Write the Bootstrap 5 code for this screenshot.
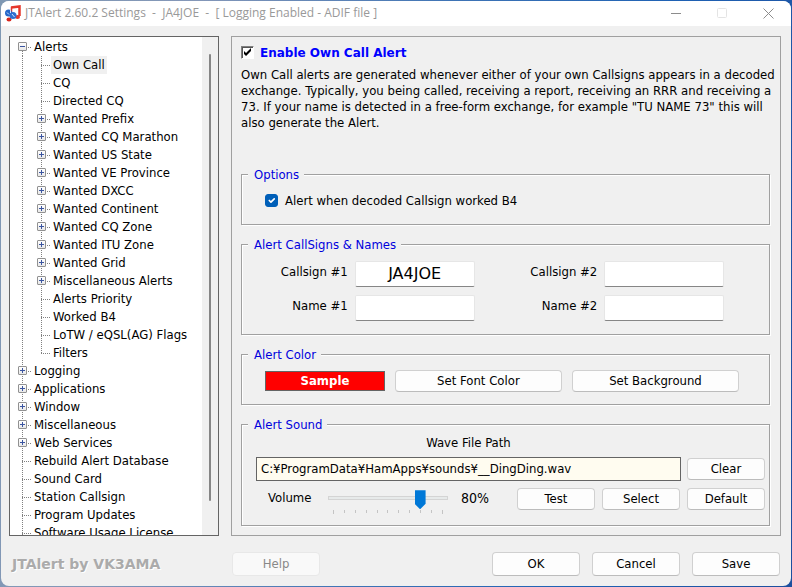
<!DOCTYPE html>
<html lang="en">
<head>
<meta charset="utf-8">
<meta name="viewport" content="width=device-width, initial-scale=1">
<title>JTAlert 2.60.2 Settings</title>
<link href="https://cdn.jsdelivr.net/npm/bootstrap@5.3.0/dist/css/bootstrap.min.css" rel="stylesheet">
<style>
:root { --face: #f0f0f0; --edge: #a0a0a0; --dark: #646464; --dot: #808080; }
body {
  padding: 1px;
  font: 13px/18px "DejaVu Sans Condensed", "DejaVu Sans", sans-serif;
  color: #000;
  background: linear-gradient(100deg, #7f98b3 0%, #8497b8 22%, #3f74b5 50%, #1f62b4 75%, #1d4f9e 100%);
}
.app-window { background: var(--face); border-radius: 8px; overflow: hidden; }
.title-bar { height: 25px; background: #fff; color: #999; font: 12px/24px "Open Sans", "Noto Sans", sans-serif; }
.title-icon { margin: 1px 4px 0 4px; }
.caption-btn { width: 46px; border: 0; background: none; color: #8c8c8c; padding: 0; display: grid; place-items: center; }
.caption-btn:disabled { color: #e4e4e4; }
.main-area { min-height: 0; padding: 10px 10px 0 8px; gap: 12px; }

/* tree */
.tree-pane { flex: none; width: 210px; background: #fff; border: 1px solid var(--dark); }
.tree { padding: 1px 0 0 3px; overflow: hidden; }
.tree ul { list-style: none; margin: 0; padding: 0; }
.tree a { color: #000; text-decoration: none; padding: 0 2px; white-space: nowrap; }
.tree a.selected { background: var(--face); }
.tree-row { display: flex; height: 18px; }
.twig {
  width: 19px; flex: none; display: grid; place-items: center;
  background:
    repeating-linear-gradient(to bottom, var(--dot) 0 1px, transparent 1px 2px) 9px 0 / 1px 100% no-repeat,
    repeating-linear-gradient(to right, var(--dot) 0 1px, transparent 1px 2px) 9px 9px / 9px 1px no-repeat;
}
.tree > ul > li:first-child > .tree-row > .twig {
  background-size: 1px 9px, 9px 1px; background-position: 9px 9px, 9px 9px;
}
.tree ul ul > li:last-child .twig { background-size: 1px 9px, 9px 1px; }
.tree ul ul {
  padding-left: 19px;
  background: repeating-linear-gradient(to bottom, var(--dot) 0 1px, transparent 1px 2px) 9px 0 / 1px 100% no-repeat;
}
.toggle {
  width: 9px; height: 9px; padding: 0; border: 1px solid #919191; border-radius: 1px;
  background:
    linear-gradient(#3b55a0, #3b55a0) center / 5px 1px no-repeat,
    linear-gradient(#3b55a0, #3b55a0) center / 1px 5px no-repeat,
    linear-gradient(#fff, #e8e8e8);
}
.toggle.open { background: linear-gradient(#3b55a0, #3b55a0) center / 5px 1px no-repeat, linear-gradient(#fff, #e8e8e8); }
.scroll-lane { width: 16px; background: var(--face); padding-top: 17px; }
.scroll-thumb { width: 2px; height: 93%; background: #868686; border-radius: 1px; }

/* page */
.page-pane { min-width: 0; border: 1px solid var(--edge); padding: 7px 10px 10px 9px; }
.page-head { font: bold 12px/18px "DejaVu Sans", sans-serif; color: #00f; gap: 6px; }
.classic-check {
  appearance: none; width: 13px; height: 13px; margin: 0;
  border: 1px solid; border-color: #808080 #fff #fff #808080;
  box-shadow: inset 1px 1px 0 #555;
  background: #fff url("data:image/svg+xml,%3Csvg xmlns='http://www.w3.org/2000/svg' viewBox='0 0 11 11'%3E%3Cpath d='M2 4v3l2 2 5-5V1L4 6z'/%3E%3C/svg%3E") center / 11px 11px no-repeat;
}
.about { margin: 5px 0 35px; line-height: 16px; white-space: nowrap; }
.group { border: 1px solid var(--edge); padding: 0 4px 0 6px; box-shadow: 1px 1px 0 #fff, inset 1px 1px 0 #fff; }
.group + .group { margin-top: 11px; }
.group > legend { float: none; width: auto; margin: 0; padding: 0 5px 0 6px; font-size: 13px; line-height: 18px; color: #00d; background: var(--face); }
.options-body { padding: 8px 0 14px 17px; gap: 7px; }
.options-body .form-check-input { width: 13px; height: 13px; margin: 0; border-color: #005fb8; background-color: #005fb8; border-radius: 3px; background-size: 11px; box-shadow: none; }
.names-body { display: grid; grid-template-columns: 100fr 120fr 116fr 120fr 34fr; gap: 8px 7px; padding: 7px 0 13px; }
.names-body label { text-align: right; line-height: 22px; }
.names-body .row-start { grid-column: 1; }
.field { height: 26px; min-width: 0; padding: 0; border: 1px solid #e6e6e6; border-bottom-color: #868686; border-radius: 2px; background: #fff; text-align: center; font: 16px/24px "DejaVu Sans", sans-serif; }
.push {
  height: 22px; padding: 0; border: 1px solid #d0d0d0; border-bottom-color: #bcbcbc; border-radius: 4px;
  background: #fdfdfd; color: #000; font-size: 13px; line-height: 20px;
}
.push:disabled { background: #f9f9f9; border-color: #e8e8e8; color: #888; opacity: 1; }
.color-body { padding: 6px 26px 12px 17px; gap: 10px; }
.sample { flex: 120 1 0; height: 20px; line-height: 18px; border: 1px solid var(--dark); background: #f00; color: #fff; }
.color-body .push { flex: 168 1 0; }
.sound-body { padding: 0 0 11px 8px; }
.path-label { margin-right: 84px; line-height: 17px; }
.path-row { margin-top: 6px; gap: 6px; }
.path-field { height: 24px; min-width: 0; border: 1px solid var(--dark); background: #fffcf0; padding: 0 4px; font-size: 13px; }
.sound-body .push { width: 78px; flex: none; }
.volume-row { margin-top: 7px; }
.volume-label { width: 72px; padding-left: 12px; line-height: 20px; }
.volume-box { flex: 0 1 120px; }
.volume { appearance: none; display: block; width: 100%; height: 19px; margin: 1px 0 2px; background: none; }
.volume::-webkit-slider-runnable-track { height: 4px; background: #e7eaea; border: 1px solid #d4d4d4; }
.volume::-webkit-slider-thumb { appearance: none; width: 11px; height: 19px; margin-top: -7px; background: #0078d7; clip-path: polygon(0 0, 100% 0, 100% 72%, 50% 100%, 0 72%); }
.ticks { padding: 0 5px; }
.ticks span { width: 1px; height: 3px; background: #c4c4c4; }
.ticks span:first-child, .ticks span:last-child { height: 4px; }
.volume-value { margin-left: 13px; font-size: 14px; line-height: 20px; }
.button-trio { gap: 7px; }

.foot { padding: 16px 11px 10px 11px; gap: 12px; }
.foot .push { width: 88px; height: 24px; line-height: 22px; }
.brand { width: 208px; font: bold 14px/24px "DejaVu Sans", sans-serif; color: #ababab; text-shadow: 1px 1px 0 #fff; }
</style>
</head>
<body class="vh-100">
<div class="app-window h-100 d-flex flex-column">
  <header class="title-bar d-flex">
    <svg class="title-icon" width="16" height="22" viewBox="0 0 16 22" aria-hidden="true">
      <path d="M6 5.500 14.500 4.500V14" fill="none" stroke="#e5372b" stroke-width="2.500"/>
      <path d="M6.500 5v11" stroke="#e5372b" stroke-width="1.500"/>
      <ellipse cx="12.500" cy="15" rx="2.500" ry="2" fill="#e5372b"/>
      <ellipse cx="4" cy="17.500" rx="2.500" ry="2" fill="#d9261c"/>
      <circle cx="3.500" cy="11" r="3.500" fill="#2467c9"/>
      <circle cx="8" cy="13.500" r="3.500" fill="#2f6fd0"/>
      <path d="M2 10.500l2 2M7 12l2.500 3M5.500 8v3" stroke="#cfe2ff" stroke-width="1"/>
    </svg>
    <span class="flex-grow-1 text-nowrap">JTAlert 2.60.2 Settings&nbsp; -&nbsp; JA4JOE&nbsp; -&nbsp; [ Logging Enabled - ADIF file ]</span>
    <button class="caption-btn" type="button" aria-label="Minimize"><svg width="11" height="11"><path d="M0 5.500h10" stroke="currentColor"/></svg></button>
    <button class="caption-btn" type="button" aria-label="Maximize" disabled><svg width="11" height="11"><rect x=".5" y=".5" width="9" height="9" rx="1" fill="none" stroke="currentColor"/></svg></button>
    <button class="caption-btn" type="button" aria-label="Close"><svg width="11" height="11"><path d="M.5.5l10 10m0-10l-10 10" stroke="currentColor"/></svg></button>
  </header>

  <main class="main-area d-flex flex-grow-1">
    <nav class="tree-pane d-flex" aria-label="Settings sections">
      <div class="tree flex-grow-1">
        <ul>
          <li>
            <div class="tree-row"><span class="twig"><button class="toggle open" type="button" aria-label="Collapse Alerts"></button></span><a href="#">Alerts</a></div>
            <ul>
              <li class="tree-row"><span class="twig"></span><a class="selected" href="#">Own Call</a></li>
              <li class="tree-row"><span class="twig"></span><a href="#">CQ</a></li>
              <li class="tree-row"><span class="twig"></span><a href="#">Directed CQ</a></li>
              <li class="tree-row"><span class="twig"><button class="toggle" type="button" aria-label="Expand"></button></span><a href="#">Wanted Prefix</a></li>
              <li class="tree-row"><span class="twig"><button class="toggle" type="button" aria-label="Expand"></button></span><a href="#">Wanted CQ Marathon</a></li>
              <li class="tree-row"><span class="twig"><button class="toggle" type="button" aria-label="Expand"></button></span><a href="#">Wanted US State</a></li>
              <li class="tree-row"><span class="twig"><button class="toggle" type="button" aria-label="Expand"></button></span><a href="#">Wanted VE Province</a></li>
              <li class="tree-row"><span class="twig"><button class="toggle" type="button" aria-label="Expand"></button></span><a href="#">Wanted DXCC</a></li>
              <li class="tree-row"><span class="twig"><button class="toggle" type="button" aria-label="Expand"></button></span><a href="#">Wanted Continent</a></li>
              <li class="tree-row"><span class="twig"><button class="toggle" type="button" aria-label="Expand"></button></span><a href="#">Wanted CQ Zone</a></li>
              <li class="tree-row"><span class="twig"><button class="toggle" type="button" aria-label="Expand"></button></span><a href="#">Wanted ITU Zone</a></li>
              <li class="tree-row"><span class="twig"><button class="toggle" type="button" aria-label="Expand"></button></span><a href="#">Wanted Grid</a></li>
              <li class="tree-row"><span class="twig"><button class="toggle" type="button" aria-label="Expand"></button></span><a href="#">Miscellaneous Alerts</a></li>
              <li class="tree-row"><span class="twig"></span><a href="#">Alerts Priority</a></li>
              <li class="tree-row"><span class="twig"></span><a href="#">Worked B4</a></li>
              <li class="tree-row"><span class="twig"></span><a href="#">LoTW / eQSL(AG) Flags</a></li>
              <li class="tree-row"><span class="twig"></span><a href="#">Filters</a></li>
            </ul>
          </li>
          <li class="tree-row"><span class="twig"><button class="toggle" type="button" aria-label="Expand"></button></span><a href="#">Logging</a></li>
          <li class="tree-row"><span class="twig"><button class="toggle" type="button" aria-label="Expand"></button></span><a href="#">Applications</a></li>
          <li class="tree-row"><span class="twig"><button class="toggle" type="button" aria-label="Expand"></button></span><a href="#">Window</a></li>
          <li class="tree-row"><span class="twig"><button class="toggle" type="button" aria-label="Expand"></button></span><a href="#">Miscellaneous</a></li>
          <li class="tree-row"><span class="twig"><button class="toggle" type="button" aria-label="Expand"></button></span><a href="#">Web Services</a></li>
          <li class="tree-row"><span class="twig"></span><a href="#">Rebuild Alert Database</a></li>
          <li class="tree-row"><span class="twig"></span><a href="#">Sound Card</a></li>
          <li class="tree-row"><span class="twig"></span><a href="#">Station Callsign</a></li>
          <li class="tree-row"><span class="twig"></span><a href="#">Program Updates</a></li>
          <li class="tree-row"><span class="twig"></span><a href="#">Software Usage License</a></li>
        </ul>
      </div>
      <div class="scroll-lane d-flex justify-content-center"><div class="scroll-thumb"></div></div>
    </nav>

    <section class="page-pane flex-grow-1">
      <div class="page-head d-flex align-items-center">
        <input class="classic-check" type="checkbox" id="enable" checked>
        <label for="enable">Enable Own Call Alert</label>
      </div>
      <p class="about">Own Call alerts are generated whenever either of your own Callsigns appears in a decoded<br>exchange. Typically, you being called, receiving a report, receiving an RRR and receiving a<br>73. If your name is detected in a free-form exchange, for example "TU NAME 73" this will<br>also generate the Alert.</p>

      <fieldset class="group">
        <legend>Options</legend>
        <div class="options-body d-flex align-items-center">
          <input class="form-check-input" type="checkbox" id="worked" checked>
          <label for="worked">Alert when decoded Callsign worked B4</label>
        </div>
      </fieldset>

      <fieldset class="group">
        <legend>Alert CallSigns &amp; Names</legend>
        <div class="names-body">
          <label for="call1">Callsign #1</label><input class="field" id="call1" type="text" value="JA4JOE">
          <label for="call2">Callsign #2</label><input class="field" id="call2" type="text">
          <label class="row-start" for="name1">Name #1</label><input class="field" id="name1" type="text">
          <label for="name2">Name #2</label><input class="field" id="name2" type="text">
        </div>
      </fieldset>

      <fieldset class="group">
        <legend>Alert Color</legend>
        <div class="color-body d-flex align-items-center">
          <div class="sample text-center fw-bold">Sample</div>
          <button class="btn push" type="button">Set Font Color</button>
          <button class="btn push" type="button">Set Background</button>
        </div>
      </fieldset>

      <fieldset class="group">
        <legend>Alert Sound</legend>
        <div class="sound-body">
          <label class="path-label d-block text-center" for="wave">Wave File Path</label>
          <div class="path-row d-flex align-items-center">
            <input class="path-field flex-grow-1" id="wave" type="text" readonly value="C:¥ProgramData¥HamApps¥sounds¥__DingDing.wav">
            <button class="btn push" type="button">Clear</button>
          </div>
          <div class="volume-row d-flex">
            <label class="volume-label" for="volume">Volume</label>
            <div class="volume-box">
              <input class="volume" id="volume" type="range" min="0" max="100" value="80">
              <div class="ticks d-flex justify-content-between"><span></span><span></span><span></span><span></span><span></span><span></span><span></span><span></span><span></span><span></span><span></span></div>
            </div>
            <output class="volume-value" for="volume">80%</output>
            <div class="button-trio d-flex ms-auto">
              <button class="btn push" type="button">Test</button>
              <button class="btn push" type="button">Select</button>
              <button class="btn push" type="button">Default</button>
            </div>
          </div>
        </div>
      </fieldset>
    </section>
  </main>

  <footer class="foot d-flex">
    <div class="brand text-nowrap">JTAlert by VK3AMA</div>
    <button class="btn push me-auto" type="button" disabled>Help</button>
    <button class="btn push" type="button">OK</button>
    <button class="btn push" type="button">Cancel</button>
    <button class="btn push" type="button">Save</button>
  </footer>
</div>
<script src="https://cdn.jsdelivr.net/npm/bootstrap@5.3.0/dist/js/bootstrap.bundle.min.js"></script>
</body>
</html>
